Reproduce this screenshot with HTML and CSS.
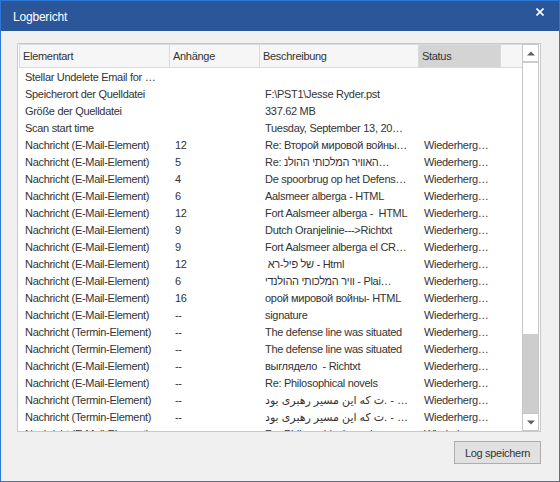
FILE: index.html
```html
<!DOCTYPE html>
<html>
<head>
<meta charset="utf-8">
<link rel="stylesheet" href="styles.css">
</head>
<body>
<div class="window">
  <div class="titlebar">
    <span class="title">Logbericht</span>
    <svg class="close" width="8" height="8" viewBox="0 0 8 8"><path d="M0.5 0.5 L7.5 7.5 M7.5 0.5 L0.5 7.5" stroke="#fff" stroke-width="1.6" fill="none"/></svg>
  </div>
  <div class="content">
    <div class="list">
      <div class="main">
        <div class="hrow">
          <div class="c c1">Elementart</div>
          <div class="c c2">Anhänge</div>
          <div class="c c3">Beschreibung</div>
          <div class="c c4 sorted">Status</div>
          <div class="c fill"></div>
        </div>
        <div class="rows">
          <div class="row"><div class="c c1">Stellar Undelete Email for …</div><div class="c c2"></div><div class="c c3"></div><div class="c c4"></div></div>
          <div class="row"><div class="c c1">Speicherort der Quelldatei</div><div class="c c2"></div><div class="c c3">F:\PST1\Jesse Ryder.pst</div><div class="c c4"></div></div>
          <div class="row"><div class="c c1">Größe der Quelldatei</div><div class="c c2"></div><div class="c c3">337.62 MB</div><div class="c c4"></div></div>
          <div class="row"><div class="c c1">Scan start time</div><div class="c c2"></div><div class="c c3">Tuesday, September 13, 20…</div><div class="c c4"></div></div>
          <div class="row"><div class="c c1">Nachricht (E-Mail-Element)</div><div class="c c2">12</div><div class="c c3">Re: Второй мировой войны…</div><div class="c c4">Wiederherg…</div></div>
          <div class="row"><div class="c c1">Nachricht (E-Mail-Element)</div><div class="c c2">5</div><div class="c c3">Re: האוויר המלכותי ההולנ…</div><div class="c c4">Wiederherg…</div></div>
          <div class="row"><div class="c c1">Nachricht (E-Mail-Element)</div><div class="c c2">4</div><div class="c c3">De spoorbrug op het Defens…</div><div class="c c4">Wiederherg…</div></div>
          <div class="row"><div class="c c1">Nachricht (E-Mail-Element)</div><div class="c c2">6</div><div class="c c3">Aalsmeer alberga - HTML</div><div class="c c4">Wiederherg…</div></div>
          <div class="row"><div class="c c1">Nachricht (E-Mail-Element)</div><div class="c c2">12</div><div class="c c3">Fort Aalsmeer alberga -  HTML</div><div class="c c4">Wiederherg…</div></div>
          <div class="row"><div class="c c1">Nachricht (E-Mail-Element)</div><div class="c c2">9</div><div class="c c3">Dutch Oranjelinie---&gt;Richtxt</div><div class="c c4">Wiederherg…</div></div>
          <div class="row"><div class="c c1">Nachricht (E-Mail-Element)</div><div class="c c2">9</div><div class="c c3">Fort Aalsmeer alberga el CR…</div><div class="c c4">Wiederherg…</div></div>
          <div class="row"><div class="c c1">Nachricht (E-Mail-Element)</div><div class="c c2">12</div><div class="c c3"> של פיל-רא - Html</div><div class="c c4">Wiederherg…</div></div>
          <div class="row"><div class="c c1">Nachricht (E-Mail-Element)</div><div class="c c2">6</div><div class="c c3">וויר המלכותי ההולנדי - Plai…</div><div class="c c4">Wiederherg…</div></div>
          <div class="row"><div class="c c1">Nachricht (E-Mail-Element)</div><div class="c c2">16</div><div class="c c3">орой мировой войны- HTML</div><div class="c c4">Wiederherg…</div></div>
          <div class="row"><div class="c c1">Nachricht (E-Mail-Element)</div><div class="c c2">--</div><div class="c c3">signature</div><div class="c c4">Wiederherg…</div></div>
          <div class="row"><div class="c c1">Nachricht (Termin-Element)</div><div class="c c2">--</div><div class="c c3">The defense line was situated</div><div class="c c4">Wiederherg…</div></div>
          <div class="row"><div class="c c1">Nachricht (Termin-Element)</div><div class="c c2">--</div><div class="c c3">The defense line was situated</div><div class="c c4">Wiederherg…</div></div>
          <div class="row"><div class="c c1">Nachricht (E-Mail-Element)</div><div class="c c2">--</div><div class="c c3">выглядело  - Richtxt</div><div class="c c4">Wiederherg…</div></div>
          <div class="row"><div class="c c1">Nachricht (E-Mail-Element)</div><div class="c c2">--</div><div class="c c3">Re: Philosophical novels</div><div class="c c4">Wiederherg…</div></div>
          <div class="row"><div class="c c1">Nachricht (Termin-Element)</div><div class="c c2">--</div><div class="c c3">ت که این مسیر رهبری بود. - …</div><div class="c c4">Wiederherg…</div></div>
          <div class="row"><div class="c c1">Nachricht (Termin-Element)</div><div class="c c2">--</div><div class="c c3">ت که این مسیر رهبری بود. - …</div><div class="c c4">Wiederherg…</div></div>
          <div class="row"><div class="c c1">Nachricht (E-Mail-Element)</div><div class="c c2">--</div><div class="c c3">Re: Philosophical novels</div><div class="c c4">Wiederherg…</div></div>
        </div>
      </div>
      <div class="sb">
        <div class="sb-btn sb-up"><svg width="8" height="5" viewBox="0 0 8 5"><path d="M0 4.5 L4 0.5 L8 4.5 Z" fill="#606060"/></svg></div>
        <div class="sb-track"></div>
        <div class="sb-thumb"></div>
        <div class="sb-btn sb-down"><svg width="8" height="5" viewBox="0 0 8 5"><path d="M0 0.5 L4 4.5 L8 0.5 Z" fill="#606060"/></svg></div>
      </div>
    </div>
    <div class="footer">
      <button class="btn">Log speichern</button>
    </div>
  </div>
</div>
</body>
</html>
```
FILE: styles.css
```css
html, body {
  margin: 0;
  padding: 0;
}
body {
  font-family: "Liberation Sans", "DejaVu Sans", Arial, sans-serif;
  font-size: 11px;
  letter-spacing: -0.3px;
  color: #333;
}
.window {
  width: 560px;
  height: 482px;
  box-sizing: border-box;
  border: 1px solid #2b78d8;
  background: #f0f0f0;
  display: flex;
  flex-direction: column;
  overflow: hidden;
}
.titlebar {
  height: 30px;
  flex: none;
  background: #2b579a;
  color: #fff;
  display: flex;
  justify-content: space-between;
  align-items: flex-start;
  padding: 0 15px 0 12px;
}
.title {
  font-size: 12px;
  letter-spacing: -0.2px;
  margin-top: 9px;
  line-height: 14px;
}
.close {
  margin-top: 7px;
}
.content {
  flex: 1;
  padding: 12px 18px 0 16px;
  display: flex;
  flex-direction: column;
}
.list {
  width: 524px;
  height: 389px;
  box-sizing: border-box;
  border: 1px solid #c9c9c9;
  background: #fff;
  padding: 0 1px;
  display: flex;
}
.main {
  flex: 1;
  overflow: hidden;
  display: flex;
  flex-direction: column;
}
.hrow {
  display: flex;
  flex: none;
  height: 24px;
  box-sizing: border-box;
  border-top: 1px solid #dadada;
  border-bottom: 1px solid #dadada;
  border-left: 1px solid #dadada;
  background: #f6f6f6;
}
.hrow .c {
  border-right: 1px solid #dadada;
  line-height: 22px;
  padding-left: 3px;
}
.hrow .sorted {
  background: #d4d4d4;
}
.hrow .fill {
  flex: 1;
  border-right: none;
}
.c {
  box-sizing: border-box;
  white-space: pre;
  overflow: hidden;
  text-overflow: ellipsis;
  flex: none;
}
.c1 { width: 150px; }
.c2 { width: 90px; }
.c3 { width: 159px; }
.c4 { width: 82px; }
.rows {
  padding-top: 1px;
  padding-left: 1px;
}
.row {
  display: flex;
  height: 17px;
  line-height: 17px;
}
.row .c {
  padding-left: 5px;
}
.sb {
  width: 17px;
  flex: none;
  box-sizing: border-box;
  border: 1px solid #c6c6c6;
  display: flex;
  flex-direction: column;
}
.sb-btn {
  height: 16px;
  flex: none;
  display: flex;
  align-items: center;
  justify-content: center;
  background: #fff;
}
.sb-up {
  border-bottom: 2px solid #cdcdcd;
}
.sb-down {
  border-top: 1px solid #c6c6c6;
}
.sb-track {
  flex: 1;
  background: #fff;
}
.sb-thumb {
  height: 79px;
  flex: none;
  background: #cdcdcd;
}
.footer {
  display: flex;
  justify-content: flex-end;
  margin-top: 9px;
}
.btn {
  width: 87px;
  height: 23px;
  box-sizing: border-box;
  border: 1px solid #adadad;
  background: #e1e1e1;
  font-family: "Liberation Sans", "DejaVu Sans", Arial, sans-serif;
  font-size: 11px;
  letter-spacing: -0.3px;
  color: #333;
  padding: 0;
  margin: 0;
}
```
